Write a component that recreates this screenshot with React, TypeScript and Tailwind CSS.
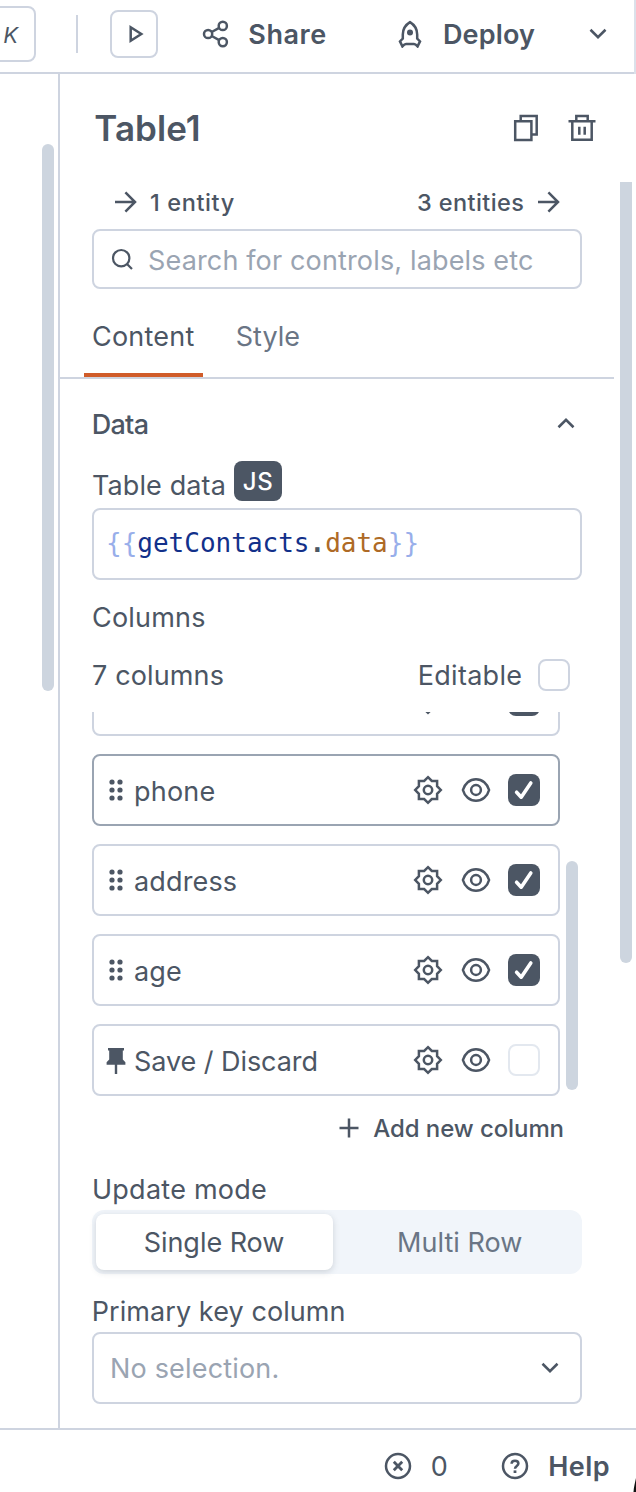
import React from "react";

type IconProps = { d?: string; w: number; h: number; sw?: number; cls?: string; children?: React.ReactNode };

function Icon({ d, w, h, sw = 2.5, cls = "", children }: IconProps) {
  return (
    <svg
      width={w}
      height={h}
      viewBox={`0 0 ${w} ${h}`}
      fill="none"
      stroke="currentColor"
      strokeWidth={sw}
      className={`shrink-0 ${cls}`}
    >
      {d && <path d={d} />}
      {children}
    </svg>
  );
}

const ArrowRight = ({ cls = "" }: { cls?: string }) => <Icon w={22} h={22} cls={cls} d="M0 11H20M10.4 1.4L20 11L10.4 20.6" />;
const ChevronDown = ({ cls = "" }: { cls?: string }) => <Icon w={18} h={12} sw={2.6} cls={cls} d="M1.5 1.8L9 9.1L16.5 1.8" />;
const ChevronUp = ({ cls = "" }: { cls?: string }) => <Icon w={18} h={12} sw={2.6} cls={cls} d="M1.5 10.2L9 2.9L16.5 10.2" />;

const Gear = () => (
  <Icon
    w={32}
    h={32}
    d="M16 3.2L19.8 6.9H25.1V12.2L28.8 16L25.1 19.8V25.1H19.8L16 28.8L12.2 25.1H6.9V19.8L3.2 16L6.9 12.2V6.9H12.2Z"
  >
    <circle cx="16" cy="16" r="4.2" />
  </Icon>
);

const Eye = () => (
  <Icon w={32} h={32} d="M2.9 16C4.6 9.6 9.8 5.2 16 5.2S27.4 9.6 29.1 16C27.4 22.4 22.2 26.8 16 26.8S4.6 22.4 2.9 16Z">
    <circle cx="16" cy="16" r="4.9" />
  </Icon>
);

const Grip = () => (
  <svg width="20" height="28" viewBox="0 0 20 28" fill="currentColor" className="shrink-0">
    {[6, 14, 22].map((y) => (
      <React.Fragment key={y}>
        <circle cx="6" cy={y} r="2.6" />
        <circle cx="14" cy={y} r="2.6" />
      </React.Fragment>
    ))}
  </svg>
);

const Pin = () => (
  <svg width="20" height="28" viewBox="0 0 20 28" fill="currentColor" className="shrink-0">
    <path d="M2 2H18V4.4H16.8V13.6L19.4 16.2V18.8H11.2V28H8.8V18.8H0.6V16.2L3.2 13.6V4.4H2Z" />
  </svg>
);

function Checkbox({ checked, faint }: { checked?: boolean; faint?: boolean }) {
  if (checked) {
    return (
      <div className="flex size-8 shrink-0 items-center justify-center rounded-lg bg-[#4c5664] text-white">
        <svg width="32" height="32" viewBox="0 0 32 32" fill="none" stroke="currentColor" strokeWidth="3.6" strokeLinecap="round" strokeLinejoin="round">
          <path d="M8.6 18.2L13.2 23.2L22.8 9" />
        </svg>
      </div>
    );
  }
  return <div className={`size-8 shrink-0 rounded-lg border-2 bg-white ${faint ? "border-[#e3e8ef]" : "border-[#ced4e0]"}`} />;
}

type ColumnProps = { label: string; tracking?: string; checked?: boolean; active?: boolean; pinned?: boolean };

function ColumnItem({ label, tracking = "", checked, active, pinned }: ColumnProps) {
  return (
    <div
      className={`flex h-[72px] w-[468px] shrink-0 items-center rounded-lg border-2 pl-3 pr-[18px] ${
        active ? "border-[#9aa4b2]" : "border-[#ced4e0]"
      }`}
    >
      {pinned ? <Pin /> : <Grip />}
      <span className={`ml-2 flex-1 pt-[3px] ${tracking}`}>{label}</span>
      <div className="flex items-center gap-4">
        <Gear />
        <Eye />
        <Checkbox checked={checked} faint={!checked} />
      </div>
    </div>
  );
}

function Header() {
  return (
    <header className="flex h-[74px] shrink-0 border-b-2 border-[#ced4e0]">
      <div className="-ml-3 mt-1.5 flex h-14 w-12 shrink-0 items-center justify-end rounded-lg border-2 border-[#ced4e0] pr-4 pt-0.5 text-[22px] italic">
        K
      </div>
      <div className="ml-10 mt-[15px] h-[38px] w-0.5 shrink-0 bg-[#ced4e0]" />
      <div className="ml-8 mt-2.5 flex size-12 shrink-0 items-center justify-center rounded-lg border-2 border-[#ced4e0]">
        <Icon w={16} h={20} cls="ml-[3px]" d="M2.7 3.2L13.3 10L2.7 16.8Z" />
      </div>
      <div className="ml-11 flex h-[68px] items-center">
        <Icon w={28} h={28}>
          <circle cx="6.1" cy="14" r="4.1" />
          <circle cx="20.8" cy="5.9" r="4.1" />
          <circle cx="20.8" cy="22.1" r="4.1" />
          <path d="M9.7 12L17.2 7.9M9.7 16L17.2 20.1" />
        </Icon>
        <span className="ml-[18.3px] w-[80px] pt-0.5 font-semibold tracking-[0.57px]">Share</span>
      </div>
      <div className="ml-[67.7px] flex h-[68px] items-center">
        <Icon w={28} h={28} d="M14 2.1C9.3 5 6.8 9.2 6.8 14.5V18.6L4 21.4L6.4 26.4C7.8 24.8 8.6 24 10 24H18C19.4 24 20.2 24.8 21.6 26.4L24 21.4L21.2 18.6V14.5C21.2 9.2 18.7 5 14 2.1Z">
          <circle cx="14" cy="12.6" r="3" fill="currentColor" stroke="none" />
        </Icon>
        <span className="ml-[19px] w-[92px] pt-0.5 font-semibold tracking-[0.14px]">Deploy</span>
      </div>
      <ChevronDown cls="ml-[54px] mt-7" />
      <div className="ml-auto h-[74px] w-0.5 shrink-0 bg-[#dbe1ea]" />
    </header>
  );
}

function StatusBar() {
  return (
    <footer className="relative flex h-16 shrink-0 border-t-2 border-[#ced4e0] pl-96">
      <div className="flex h-[72px] items-center">
        <Icon w={28} h={28}>
          <circle cx="14" cy="14" r="12" />
          <path d="M9.8 9.8L18.2 18.2M18.2 9.8L9.8 18.2" strokeWidth="2.8" />
        </Icon>
        <span className="ml-[18.7px] w-[17px] pt-0.5">0</span>
        <Icon w={28} h={28} cls="ml-[53.3px]">
          <circle cx="14" cy="14" r="12" />
          <path d="M10.6 11.8C10.6 9.8 12 8.7 14 8.7S17.4 9.8 17.4 11.6C17.4 14 14 13.9 14 16.7" strokeWidth="2.5" />
          <path d="M14 18.4V21" strokeWidth="2.8" />
        </Icon>
        <span className="ml-[19.3px] pt-0.5 font-semibold tracking-[0.41px]">Help</span>
      </div>
      <svg width="3" height="14" viewBox="0 0 3 14" className="absolute bottom-0 right-0">
        <path d="M3 0V14H0.5C0.8 9 2 5 3 0Z" fill="#111" />
      </svg>
    </footer>
  );
}

export default function App() {
  return (
    <div className="flex h-[1492px] w-[636px] flex-col overflow-hidden whitespace-nowrap bg-white font-['Inter',sans-serif] text-[27px] leading-8 text-[#4c5664]">
      <Header />
      <main className="flex h-[1354px] shrink-0">
        <div className="flex w-[60px] shrink-0 justify-end border-r-2 border-[#ced4e0] pr-1">
          <div className="mt-[70px] h-[547px] w-3 rounded-full bg-[#cdd5df]" />
        </div>
        <section className="flex w-[576px] flex-col">
          <div className="flex h-[108px] shrink-0 items-center pl-[34.3px]">
            <h1 className="w-[417.7px] text-[35px] font-semibold leading-10 tracking-[0.05px]">Table1</h1>
            <Icon w={28} h={28} d="M3.2 7.3H19.4V26H3.2ZM8.7 7V2H24.7V20.4H20" />
            <Icon w={28} h={28} cls="ml-7" d="M0.5 7.3H27.5M4.3 7.3V25.8H23.7V7.3M8.3 7.3V2H19.7V7.3M11.3 12.7V20.8M16.7 12.7V20.8" />
          </div>
          <div className="flex">
            <div className="flex w-[554px] shrink-0 flex-col">
              <div className="flex h-[47px] items-center justify-between pb-1.5 pl-[55px] pr-[54px] text-[23.5px] font-medium">
                <div className="flex items-center">
                  <ArrowRight cls="-mt-0.5" />
                  <span className="ml-[13px] tracking-[0.61px]">1 entity</span>
                </div>
                <div className="flex items-center">
                  <span className="w-[121px] tracking-[0.41px]">3 entities</span>
                  <ArrowRight cls="-mt-0.5" />
                </div>
              </div>
              <div className="ml-8 flex h-[60px] w-[490px] items-center rounded-lg border-2 border-[#ced4e0] pl-4 text-[#9aa4b2]">
                <Icon w={24} h={24} sw={2.2} cls="text-[#4c5664]" d="M17 17L22 22">
                  <circle cx="11.2" cy="11.2" r="8.2" />
                </Icon>
                <span className="ml-[14px] pt-[3px] tracking-[0.15px]">Search for controls, labels etc</span>
              </div>
              <div className="flex h-[90px] border-b-2 border-[#ced4e0] pl-6">
                <div className="w-[119px] border-b-4 border-[#d05c29] pl-2 pt-8 tracking-[0.21px]">Content</div>
                <div className="pl-[32.7px] pt-8 tracking-[0.02px] text-[#6a7585]">Style</div>
              </div>
              <div className="flex h-[92px] items-center justify-between pl-[31.7px] pr-[39px]">
                <h2 className="font-medium tracking-[-0.71px]">Data</h2>
                <ChevronUp cls="-mt-1" />
              </div>
              <div className="-mt-2.5 flex h-12 pl-8">
                <span className="w-[142px] pt-[9px] tracking-[0.11px]">Table data</span>
                <div className="flex h-10 w-12 items-center justify-center rounded-lg bg-[#4c5664] pt-0.5 text-[24px] font-medium tracking-[0.5px] text-white">
                  JS
                </div>
              </div>
              <div className="-mt-px ml-8 flex h-[72px] w-[490px] items-center rounded-lg border-2 border-[#ced4e0] pb-0.5 pl-3 font-['DejaVu_Sans_Mono',monospace] text-[26px]">
                <span className="text-[#98aeea]">{"{{"}</span>
                <span className="text-[#12308a]">getContacts</span>
                <span className="font-bold">.</span>
                <span className="text-[#ae6a26]">data</span>
                <span className="text-[#98aeea]">{"}}"}</span>
              </div>
              <div className="mt-[22px] pl-8 tracking-[0.2px]">Columns</div>
              <div className="mt-[25px] flex h-8 items-center pl-8">
                <span className="w-[325.7px] pt-0.5 tracking-[0.14px]">7 columns</span>
                <span className="w-[120.3px] pt-0.5 tracking-[0.3px]">Editable</span>
                <Checkbox />
              </div>
              <div className="mt-[21px] flex h-[384px] overflow-hidden pl-8">
                <div className="-mt-12 flex flex-col gap-[18px]">
                  <ColumnItem label="" checked />
                  <ColumnItem label="phone" tracking="tracking-[0.2px]" checked active />
                  <ColumnItem label="address" tracking="tracking-[0.15px]" checked />
                  <ColumnItem label="age" tracking="tracking-[0.09px]" checked />
                  <ColumnItem label="Save / Discard" tracking="tracking-[-0.06px]" pinned />
                </div>
                <div className="ml-1.5 mt-[149px] h-[229px] w-3 rounded-full bg-[#cdd5df]" />
              </div>
              <div className="flex h-[65px] items-center pl-[279px] text-[24px] font-medium">
                <Icon w={20} h={20} cls="-mt-0.5" d="M0.5 10H19.5M10 0.5V19.5" />
                <span className="ml-[14.3px] tracking-[-0.09px]">Add new column</span>
              </div>
              <div className="mt-[13px] pl-8 tracking-[0.25px]">Update mode</div>
              <div className="ml-8 mt-1 flex h-16 w-[490px] items-center rounded-xl bg-[#f1f5fa] pl-1">
                <div className="flex h-14 w-[237px] items-center justify-center rounded-lg bg-white pr-px pt-0.5 tracking-[-0.03px] shadow-[0_2px_6px_rgba(76,86,100,0.22)]">
                  Single Row
                </div>
                <div className="pl-[64px] pt-0.5 tracking-[0.03px] text-[#6a7585]">Multi Row</div>
              </div>
              <div className="mt-[22px] pl-[31.7px] tracking-[0.08px]">Primary key column</div>
              <div className="ml-8 mt-1 flex h-[72px] w-[490px] items-center justify-between rounded-lg border-2 border-[#ced4e0] pl-[16px] pr-[21px] text-[#9aa4b2]">
                <span className="pt-0.5 tracking-[0.18px]">No selection.</span>
                <ChevronDown cls="text-[#4c5664]" />
              </div>
            </div>
            <div className="ml-1.5 h-[781px] w-3 rounded-b-full bg-[#cdd5df]" />
          </div>
        </section>
      </main>
      <StatusBar />
    </div>
  );
}
